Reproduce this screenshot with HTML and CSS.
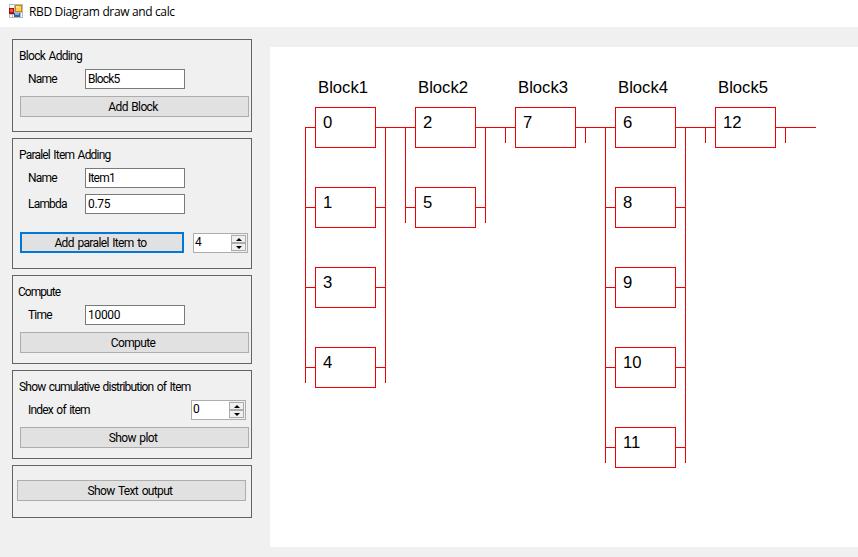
FILE: index.html
```html
<!DOCTYPE html>
<html lang="en">
<head>
<meta charset="utf-8">
<title>RBD Diagram draw and calc</title>
<link rel="stylesheet" href="styles.css">
</head>
<body>
<header class="titlebar">
  <svg class="app-icon" width="14" height="14" viewBox="0 0 14 14" shape-rendering="crispEdges">
    <path fill="#b9b9b9" d="M0 0h14v14H0z"/>
    <path fill="#fff" d="M1 1h4v3H1zM1 11h2v2H1zM4 11h1v2H4zM12 9h1v4h-1z"/>
    <path fill="#a51310" d="M0 4h5v6H0z"/>
    <path fill="#e2574c" d="M1 5h3v3H1z"/>
    <path fill="#c68a0c" d="M6 1h7v7H6z"/>
    <path fill="#ffd051" d="M7 2h5v5H7z"/>
    <path fill="#ffe79b" d="M7 2h3v2H7z"/>
    <path fill="#2f62b5" d="M5 9h6v4H5z"/>
    <path fill="#7fb0ee" d="M6 9h4v2H6z"/>
  </svg>
  <h1 class="title">RBD Diagram draw and calc</h1>
</header>
<main class="window">
  <aside class="sidebar">
    <section class="panel panel-block">
      <h2 class="caption">Block Adding</h2>
      <div class="row"><span class="label">Name</span><span class="field">Block5</span></div>
      <button class="button">Add Block</button>
    </section>
    <section class="panel panel-item">
      <h2 class="caption">Paralel Item Adding</h2>
      <div class="row"><span class="label">Name</span><span class="field">Item1</span></div>
      <div class="row row-next"><span class="label">Lambda</span><span class="field numeric">0.75</span></div>
      <div class="actions">
        <button class="button focused">Add paralel Item to</button>
        <div class="spinner"><span class="value">4</span><span class="arrows"><i class="up"></i><i class="down"></i></span></div>
      </div>
    </section>
    <section class="panel panel-compute">
      <h2 class="caption caption-left">Compute</h2>
      <div class="row"><span class="label">Time</span><span class="field numeric">10000</span></div>
      <button class="button">Compute</button>
    </section>
    <section class="panel panel-plot">
      <h2 class="caption">Show cumulative distribution of Item</h2>
      <div class="row row-index"><span class="label">Index of item</span>
        <div class="spinner"><span class="value">0</span><span class="arrows"><i class="up"></i><i class="down"></i></span></div>
      </div>
      <button class="button">Show plot</button>
    </section>
    <section class="panel panel-output">
      <button class="button">Show Text output</button>
    </section>
  </aside>
  <section class="canvas">
    <svg class="diagram" width="588" height="500" viewBox="270 47 588 500">
      <g class="wires">
        <path d="M305 127.5H315M376 127.5H415M476 127.5H515M576 127.5H615M676 127.5H715M776 127.5H816"/>
        <path d="M305.5 127V383M385.5 127V383M405.5 127V223M485.5 127V223M505.5 127V143M585.5 127V143M605.5 127V463M685.5 127V463M705.5 127V143M785.5 127V143"/>
        <path d="M305 207.5H315M376 207.5H386M305 287.5H315M376 287.5H386M305 367.5H315M376 367.5H386"/>
        <path d="M405 207.5H415M476 207.5H486"/>
        <path d="M605 207.5H615M676 207.5H686M605 287.5H615M676 287.5H686M605 367.5H615M676 367.5H686M605 447.5H615M676 447.5H686"/>
        <rect x="315.5" y="107.5" width="60" height="40"/>
        <rect x="315.5" y="187.5" width="60" height="40"/>
        <rect x="315.5" y="267.5" width="60" height="40"/>
        <rect x="315.5" y="347.5" width="60" height="40"/>
        <rect x="415.5" y="107.5" width="60" height="40"/>
        <rect x="415.5" y="187.5" width="60" height="40"/>
        <rect x="515.5" y="107.5" width="60" height="40"/>
        <rect x="615.5" y="107.5" width="60" height="40"/>
        <rect x="615.5" y="187.5" width="60" height="40"/>
        <rect x="615.5" y="267.5" width="60" height="40"/>
        <rect x="615.5" y="347.5" width="60" height="40"/>
        <rect x="615.5" y="427.5" width="60" height="40"/>
        <rect x="715.5" y="107.5" width="60" height="40"/>
      </g>
      <g class="names">
        <text x="318" y="93">Block1</text>
        <text x="418" y="93">Block2</text>
        <text x="518" y="93">Block3</text>
        <text x="618" y="93">Block4</text>
        <text x="718" y="93">Block5</text>
        <text x="323" y="128">0</text>
        <text x="323" y="208">1</text>
        <text x="323" y="288">3</text>
        <text x="323" y="368">4</text>
        <text x="423" y="128">2</text>
        <text x="423" y="208">5</text>
        <text x="523" y="128">7</text>
        <text x="623" y="128">6</text>
        <text x="623" y="208">8</text>
        <text x="623" y="288">9</text>
        <text x="623" y="368">10</text>
        <text x="623" y="448">11</text>
        <text x="723" y="128">12</text>
      </g>
    </svg>
  </section>
</main>
</body>
</html>
```
FILE: styles.css
```css
* { box-sizing: border-box; }
body {
  margin: 0;
  width: 858px;
  height: 557px;
  overflow: hidden;
  background: #f0f0f0;
  color: #000;
  font: 12px/16px Roboto, "Liberation Sans", sans-serif;
  letter-spacing: -0.8px;
  word-spacing: 1.2px;
}
.titlebar {
  display: flex;
  height: 27px;
  padding: 4px 9px;
  gap: 6px;
  background: #fff;
}
.app-icon { display: block; }
.title {
  margin: 0;
  font: 12px/16px "Open Sans", sans-serif;
  letter-spacing: -0.36px;
  word-spacing: 0;
}
.window { display: flex; height: 530px; }
.sidebar {
  display: flex;
  flex-direction: column;
  gap: 6px;
  width: 270px;
  padding: 12px 18px 0 12px;
}
.panel {
  width: 240px;
  padding: 8px 0 0 7px;
  border: 1px solid #646464;
}
.panel-block { height: 93px; }
.panel-item { height: 131px; }
.panel-compute, .panel-plot { height: 89px; }
.panel-output { height: 53px; padding: 14px 0 0 4px; }
.panel-output .button { margin-top: 0; }
.caption {
  margin: 0 0 5px -1px;
  font: inherit;
}
.panel-block .caption { letter-spacing: -0.7px; }
.caption-left { margin-left: -2px; letter-spacing: -0.95px; }
.row { display: flex; height: 20px; align-items: center; }
.row-next { margin-top: 6px; }
.row-index { justify-content: space-between; padding-right: 5px; }
.label { width: 65px; padding-left: 8px; white-space: nowrap; }
.field {
  width: 100px;
  height: 20px;
  padding: 1px 2px;
  border: 1px solid #7a7a7a;
  background: #fff;
}
.numeric { letter-spacing: -0.3px; }
.button {
  display: block;
  width: 229px;
  height: 21px;
  margin: 7px 0 0;
  padding: 0 3px 0 0;
  border: 1px solid #adadad;
  background: #e1e1e1;
  color: #000;
  font: inherit;
  letter-spacing: -0.65px;
  word-spacing: inherit;
  text-align: center;
}
.actions { display: flex; gap: 9px; margin-top: 18px; }
.actions .button { margin: 0; width: 164px; }
.actions .spinner { margin-top: 1px; }
.actions .focused { border: 2px solid #0078d7; }
.spinner {
  display: flex;
  justify-content: space-between;
  width: 55px;
  height: 20px;
  padding-left: 1px;
  border: 1px solid #abadb3;
  background: #fff;
}
.spinner .value { line-height: 16px; }
.arrows {
  display: flex;
  flex-direction: column;
  width: 16px;
  height: 18px;
  padding: 1px 1px 1px 0;
  background: #f0f0f0;
}
.arrows i {
  display: flex;
  align-items: center;
  justify-content: center;
  height: 8px;
  width: 15px;
  border: 1px solid #acacac;
  background: #f0f0f0;
}
.arrows i::before { content: ""; border: 0 solid transparent; border-width: 0 3px; }
.arrows .up::before { border-bottom: 3px solid #000; }
.arrows .down::before { border-top: 3px solid #000; }
.canvas { width: 588px; height: 500px; margin-top: 20px; background: #fff; }
.diagram { display: block; }
.wires { fill: none; stroke: #f00000; stroke-width: 1; shape-rendering: crispEdges; }
.names { font: 16.7px "Liberation Sans", Arial, sans-serif; letter-spacing: 0; word-spacing: 0; fill: #000; }
```
